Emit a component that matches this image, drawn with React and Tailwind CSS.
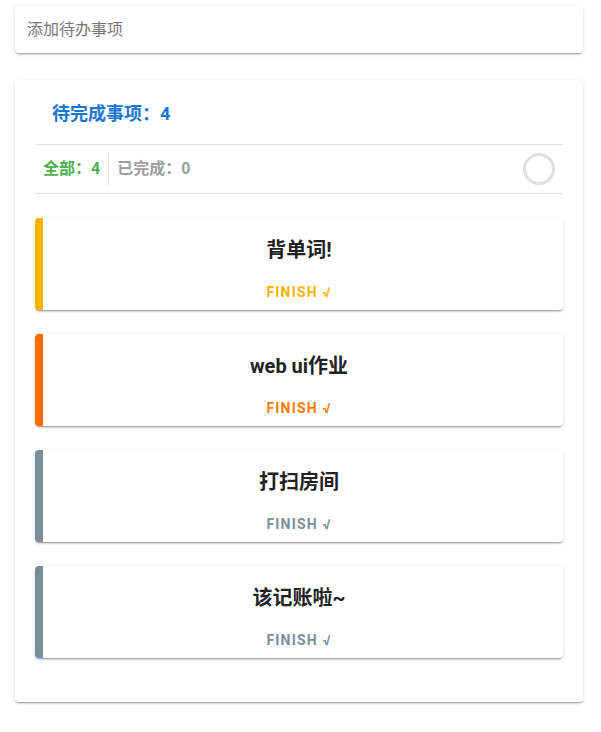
const TODOS = [
  { id: 1, title: '背单词!', color: 'border-[#ffb300]', text: 'text-[#ffb300]' },
  { id: 2, title: 'web ui作业', color: 'border-[#ff6d00]', text: 'text-[#f57c00]' },
  { id: 3, title: '打扫房间', color: 'border-[#78909c]', text: 'text-[#78909c]' },
  { id: 4, title: '该记账啦~', color: 'border-[#78909c]', text: 'text-[#78909c]' },
];

const FONT = "font-['Roboto','Noto_Sans_CJK_SC',sans-serif]";

export default function App() {
  return (
    <div className={`min-h-[732px] bg-white pl-[15px] pr-[18px] pt-[6px] ${FONT}`}>
      {/* Input */}
      <div className="h-[47px] bg-white rounded shadow-[0_2px_2px_-1px_rgba(0,0,0,0.35),0_1px_4px_rgba(0,0,0,0.12)] flex items-center px-3">
        <input
          placeholder="添加待办事项"
          className="w-full outline-none text-[16px] placeholder:text-[#777] text-[#333] bg-transparent"
        />
      </div>

      {/* Main card */}
      <div className="mt-[27px] bg-white rounded shadow-[0_2px_2px_-1px_rgba(0,0,0,0.35),0_1px_4px_rgba(0,0,0,0.12)] px-5 pt-[22px] pb-[44px]">
        <h2 className="pl-[17px] text-[18px] font-bold text-[#1976d2] leading-[24px]">待完成事项：4</h2>

        <div className="mt-[18px] border-t border-b border-[#e0e0e0] h-[50px] flex items-center">
          <span className="pl-[8px] pr-[8px] text-[16px] font-bold text-[#4caf50]">全部：4</span>
          <div className="w-px h-[34px] bg-[#e0e0e0]" />
          <span className="pl-[8px] text-[16px] font-bold text-[#9e9e9e]">已完成：0</span>
          <div className="ml-auto mr-[8px] w-[32px] h-[32px] rounded-full border-[3px] border-[#e0e0e0]" />
        </div>

        <div className="mt-[24px] flex flex-col gap-[24px]">
          {TODOS.map((todo) => (
            <div
              key={todo.id}
              className={`h-[92px] bg-white rounded border-l-[8px] ${todo.color} pr-[8px] shadow-[0_2px_2px_-1px_rgba(0,0,0,0.4),0_1px_4px_rgba(0,0,0,0.1)] flex flex-col items-center`}
            >
              <p className="mt-[19px] text-[20px] font-bold text-[#222] leading-[26px]">{todo.title}</p>
              <p className={`mt-[19px] text-[14px] font-bold tracking-[1.2px] ${todo.text}`}>FINISH √</p>
            </div>
          ))}
        </div>
      </div>
    </div>
  );
}
